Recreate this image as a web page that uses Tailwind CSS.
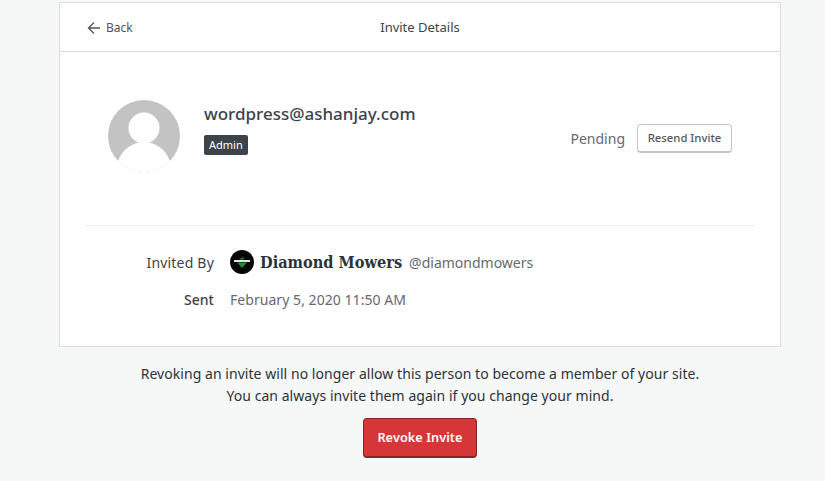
<!DOCTYPE html>
<html lang="en">
<head>
    <meta charset="UTF-8">
    <title>Invite Details</title>
    <script src="https://cdn.jsdelivr.net/npm/@tailwindcss/browser@4"></script>
</head>
<body class="bg-[#f6f7f7] h-[481px] overflow-hidden font-['Noto_Sans',sans-serif] text-[#2b2d2f]">
    <div class="w-[722px] ml-[59px] mt-[2px] bg-white border border-[#dcdcde] h-[345px]">
        <div class="relative h-[49px] flex items-center justify-center border-b border-[#dcdcde]">
            <a href="#" class="absolute left-[27px] top-[16px] flex items-center gap-[5px] text-[12px] text-[#50575e]">
                <svg class="w-[14px] h-[14px]" viewBox="0 0 14 14" fill="none" stroke="#50575e" stroke-width="1.3"><path d="M13 7H1.5M7 1.5L1.5 7L7 12.5"/></svg>
                Back
            </a>
            <h1 class="text-[13px] text-[#3c434a] pt-[1px]">Invite Details</h1>
        </div>

        <div class="flex items-center justify-between h-[173px] ml-[48px] mr-[48px]">
            <div class="flex items-center gap-[24px] -mt-[5px]">
                <svg class="w-[72px] h-[72px]" viewBox="0 0 72 72">
                    <defs><clipPath id="avatar"><circle cx="36" cy="36" r="36"/></clipPath></defs>
                    <g clip-path="url(#avatar)">
                        <rect width="72" height="72" fill="#c3c3c3"/>
                        <circle cx="36" cy="28" r="15.5" fill="#fff"/>
                        <ellipse cx="36" cy="72" rx="28" ry="30" fill="#fff"/>
                    </g>
                </svg>
                <div class="-mt-[15px]">
                    <div class="text-[17px] leading-[24px] font-medium text-[#3c434a]">wordpress@ashanjay.com</div>
                    <span class="inline-block mt-[9px] bg-[#3c434a] text-white text-[11px] leading-[20px] px-[5px] rounded-[2px]">Admin</span>
                </div>
            </div>
            <div class="flex items-center gap-[12px]">
                <span class="text-[14px] text-[#646970]">Pending</span>
                <button class="h-[29px] w-[95px] bg-white border border-[#c3c4c7] border-b-2 rounded-[4px] text-[11.3px] font-medium text-[#50575e]">Resend Invite</button>
            </div>
        </div>

        <div class="mx-[25px] border-t border-[#f0f0f1] pt-[24px]">
            <div class="grid grid-cols-[129px_1fr] gap-x-[16px] gap-y-[15px] items-center text-[14px]">
                <div class="text-right text-[#3c434a] tracking-[0.2px]">Invited By</div>
                <div class="flex items-center h-[24px]">
                    <svg class="w-[24px] h-[24px] mr-[6px]" viewBox="0 0 24 24">
                        <circle cx="12" cy="12" r="12" fill="#050505"/>
                        <rect x="4" y="10" width="16" height="2" fill="#dfe6df"/>
                        <path d="M7 12.5H17L12 18Z" fill="#1c8a3a"/>
                        <path d="M9 9.5L14 7L13 9.5Z" fill="#2aa34a"/>
                    </svg>
                    <span class="font-['DejaVu_Serif',serif] font-bold font-stretch-condensed text-[16.2px] leading-[22px] text-[#2c3338] mr-[7px] mt-[2px]">Diamond Mowers</span>
                    <span class="text-[#646970]">@diamondmowers</span>
                </div>
                <div class="text-right font-medium text-[#3c434a]">Sent</div>
                <div class="text-[#646970] tracking-[0.05px]">February 5, 2020 11:50 AM</div>
            </div>
        </div>
    </div>

    <div class="w-[722px] ml-[59px] pt-[16px] text-center text-[14px] leading-[22px] text-[#2c3338] tracking-[0.05px]">
        <p>Revoking an invite will no longer allow this person to become a member of your site.</p>
        <p>You can always invite them again if you change your mind.</p>
        <button class="mt-[11px] w-[114px] h-[40px] pb-[2px] bg-[#d63638] border border-[#8a2424] border-b-2 rounded-[4px] text-white text-[12.75px] font-semibold">Revoke Invite</button>
    </div>
</body>
</html>
